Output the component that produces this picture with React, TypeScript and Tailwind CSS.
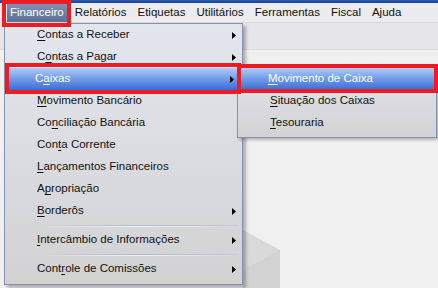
import React from "react";

type Item =
  | { sep: true }
  | { sep?: false; pre: string; key: string; post: string; arrow?: boolean; active?: boolean };

const mainItems: Item[] = [
  { pre: "", key: "C", post: "ontas a Receber", arrow: true },
  { pre: "C", key: "o", post: "ntas a Pagar", arrow: true },
  { pre: "C", key: "a", post: "ixas", arrow: true, active: true },
  { pre: "", key: "M", post: "ovimento Bancário" },
  { pre: "Co", key: "n", post: "ciliação Bancária" },
  { pre: "Con", key: "t", post: "a Corrente" },
  { pre: "", key: "L", post: "ançamentos Financeiros" },
  { pre: "A", key: "p", post: "ropriação" },
  { pre: "", key: "B", post: "orderôs", arrow: true },
  { sep: true },
  { pre: "", key: "I", post: "ntercâmbio de Informações", arrow: true },
  { sep: true },
  { pre: "Cont", key: "r", post: "ole de Comissões", arrow: true },
];

const subItems: Item[] = [
  { pre: "", key: "M", post: "ovimento de Caixa", active: true },
  { pre: "", key: "S", post: "ituação dos Caixas" },
  { pre: "", key: "T", post: "esouraria" },
];

function Arrow() {
  return (
    <svg width="4" height="7" viewBox="0 0 4 7" className="absolute right-[6px] top-[8px]">
      <path d="M0 0 L4 3.5 L0 7 Z" fill="#000" />
    </svg>
  );
}

function MenuRows({ items }: { items: Item[] }) {
  return (
    <>
      {items.map((it, i) =>
        it.sep ? (
          <div key={i} className="flex h-[7px] flex-col justify-center pl-[34px] pr-[4px]">
            <div className="h-px bg-linear-to-r from-transparent via-[#b3b6cc] to-[#c8cad8]" />
            <div className="h-px bg-linear-to-r from-transparent via-[#f4f4f8] to-transparent" />
          </div>
        ) : (
          <div
            key={i}
            className={
              "relative flex h-[22px] items-center pl-[32px] " +
              (it.active
                ? "mx-[2px] -ml-[0px] bg-linear-to-b from-[#b0cbf6] via-[#6f9ae8] to-[#3a6cd6] text-white"
                : "text-[#111]")
            }
          >
            <span className={it.active ? "-ml-[2px]" : ""}>
              {it.pre}
              <span className="underline decoration-1 underline-offset-[2px]">{it.key}</span>
              {it.post}
            </span>
            {it.arrow && <Arrow />}
          </div>
        )
      )}
    </>
  );
}

export default function App() {
  const bar = ["Financeiro", "Relatórios", "Etiquetas", "Utilitários", "Ferramentas", "Fiscal", "Ajuda"];
  return (
    <div className="relative h-[288px] w-[438px] overflow-hidden bg-[#f0f0f0] font-['Liberation_Sans',Arial,sans-serif] text-[11.5px] leading-none">
      <div className="h-[3px] bg-linear-to-b from-[#2a5cb8] to-[#1c4596]" />
      <div className="flex h-[20px] items-stretch gap-[5px] border-b border-[#d8d8dc] bg-[#ececef] pl-[7px]">
        {bar.map((b, i) => (
          <div
            key={b}
            className={
              "flex items-center px-[3px] " +
              (i === 0 ? "bg-linear-to-b from-[#8292b4] to-[#5e7096] text-white" : "text-[#111]")
            }
          >
            {b}
          </div>
        ))}
      </div>
      <div className="h-[27px] border-b border-[#dcdcdc] bg-[#e6e6e8]" />

      {/* background watermark shape */}
      <svg className="absolute left-[243px] top-[228px]" width="40" height="60" viewBox="0 0 40 60">
        <polygon points="0,2 37,22 37,60 0,60" fill="#d9d9d9" />
        <polygon points="0,42 37,22 37,60 0,60" fill="#d2d2d2" />
      </svg>

      {/* main dropdown */}
      <div className="absolute left-[4px] top-[23px] w-[239px] border border-[#8692ad] bg-linear-to-b from-[#e4e6ee] to-[#d2d2d3] pb-[4px] shadow-[3px_3px_3px_rgba(0,0,0,0.28)]">
        <MenuRows items={mainItems} />
      </div>

      {/* submenu */}
      <div className="absolute left-[237px] top-[67px] w-[200px] border border-[#8692ad] bg-linear-to-b from-[#e3e4ea] to-[#d3d3d5] pb-[3px] shadow-[2px_2px_3px_rgba(0,0,0,0.25)]">
        <MenuRows items={subItems} />
      </div>

      {/* red annotation boxes */}
      <div className="absolute left-[2px] top-[0px] h-[27px] w-[69px] border-[4px] border-[#ec1c24]" />
      <div className="absolute left-[5px] top-[63px] h-[31px] w-[236px] border-[4px] border-[#ec1c24]" />
      <div className="absolute left-[237px] top-[64px] h-[29px] w-[201px] border-[4px] border-[#ec1c24]" />
    </div>
  );
}
